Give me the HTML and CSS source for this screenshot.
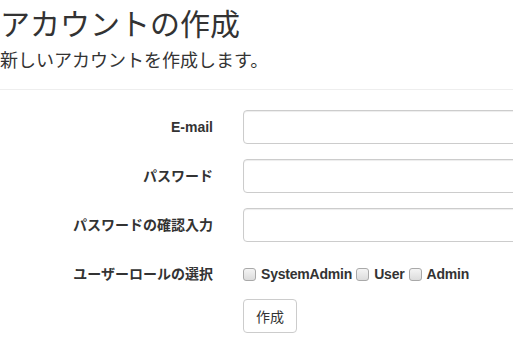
FILE: index.html
```html
<!DOCTYPE html>
<html lang="ja">
<head>
<meta charset="utf-8">
<title>アカウントの作成</title>
<link rel="stylesheet" href="styles.css">
</head>
<body>
<div class="page">
  <h2 class="title">アカウントの作成</h2>
  <h4 class="subtitle">新しいアカウントを作成します。</h4>
  <hr class="rule">
  <form class="form">
    <div class="row">
      <label class="label" for="email">E-mail</label>
      <div class="field"><input class="input" id="email" type="text"></div>
    </div>
    <div class="row">
      <label class="label" for="pw">パスワード</label>
      <div class="field"><input class="input" id="pw" type="password"></div>
    </div>
    <div class="row">
      <label class="label" for="pw2">パスワードの確認入力</label>
      <div class="field"><input class="input" id="pw2" type="password"></div>
    </div>
    <div class="row">
      <span class="label">ユーザーロールの選択</span>
      <div class="field checks">
        <label class="check"><input class="box" type="checkbox"><span>SystemAdmin</span></label>
        <label class="check"><input class="box" type="checkbox"><span>User</span></label>
        <label class="check"><input class="box" type="checkbox"><span>Admin</span></label>
      </div>
    </div>
    <div class="row last">
      <span class="spacer"></span>
      <div class="field"><button class="btn" type="button">作成</button></div>
    </div>
  </form>
</div>
</body>
</html>
```

FILE: styles.css
```css
html, body {
  margin: 0;
  padding: 0;
  overflow: hidden;
  background: #fff;
}
body {
  font-family: "Liberation Sans", "Noto Sans CJK JP", sans-serif;
  font-size: 14px;
  line-height: 20px;
  color: #333;
}
.page {
  width: 513px;
}
.title {
  margin: 6px 0 10px;
  font-size: 30px;
  line-height: 33px;
  font-weight: 400;
  font-family: "Noto Sans CJK JP", sans-serif;
}
.subtitle {
  margin: 10px 0 0;
  font-size: 18px;
  line-height: 20px;
  font-weight: 400;
  font-family: "Noto Sans CJK JP", sans-serif;
}
.rule {
  margin: 20px 0;
  border: 0;
  border-top: 1px solid #eee;
  height: 0;
}
.form {
  display: flex;
  flex-direction: column;
  gap: 15px;
}
.row {
  display: grid;
  grid-template-columns: 228px 1fr;
}
.label, .spacer {
  padding: 7px 15px 0 0;
  text-align: right;
  font-weight: 700;
  line-height: 20px;
}
.field {
  padding-left: 15px;
  min-width: 0;
}
.input {
  display: block;
  box-sizing: border-box;
  width: calc(100% + 20px);
  height: 34px;
  margin: 0;
  padding: 6px 12px;
  border: 1px solid #ccc;
  border-radius: 4px;
  box-shadow: inset 0 1px 1px rgba(0,0,0,.075);
  font: inherit;
  background: #fff;
}
.checks {
  display: flex;
  align-items: center;
  padding-top: 7px;
  height: 20px;
  gap: 4px;
}
.check {
  display: flex;
  align-items: center;
  gap: 5px;
  font-weight: 700;
  line-height: 20px;
  letter-spacing: -0.2px;
}
.box {
  appearance: none;
  -webkit-appearance: none;
  margin: 0;
  width: 13px;
  height: 13px;
  box-sizing: border-box;
  border: 1px solid #a9a9a9;
  border-radius: 3px;
  background: linear-gradient(#f4f4f4, #dcdcdc);
}
.btn {
  box-sizing: border-box;
  height: 34px;
  padding: 6px 12px;
  border: 1px solid #ccc;
  border-radius: 4px;
  background: #fff;
  color: #333;
  font-family: "Noto Sans CJK JP", sans-serif;
  font-size: 14px;
  line-height: 20px;
}
```
